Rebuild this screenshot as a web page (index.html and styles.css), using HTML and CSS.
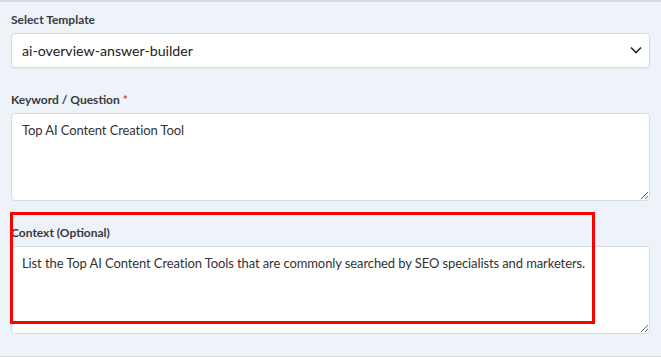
FILE: index.html
```html
<!DOCTYPE html>
<html>
<head>
<meta charset="utf-8">
<link rel="stylesheet" href="styles.css">
</head>
<body>
<div class="panel">
  <div class="group">
    <label class="label">Select Template</label>
    <div class="select">
      <span class="select-value">ai-overview-answer-builder</span>
      <svg class="chevron" width="12" height="8" viewBox="0 0 12 8"><path d="M1 1.5 L6 6.5 L11 1.5" fill="none" stroke="#1f2937" stroke-width="1.6"/></svg>
    </div>
  </div>
  <div class="group">
    <label class="label">Keyword / Question <span class="req">*</span></label>
    <textarea class="field">Top AI Content Creation Tool</textarea>
  </div>
  <div class="group context">
    <label class="label">Context (Optional)</label>
    <textarea class="field">List the Top AI Content Creation Tools that are commonly searched by SEO specialists and marketers.</textarea>
    <div class="highlight"></div>
  </div>
</div>
</body>
</html>
```
FILE: styles.css
```css
html, body {
  margin: 0;
  padding: 0;
}
body {
  background: #eef3fa;
  font-family: Lato, "Noto Sans", sans-serif;
  color: #333;
  width: 661px;
  height: 357px;
  overflow: hidden;
}
.panel {
  border-top: 2px solid #d5d8dd;
  border-bottom: 1px solid #d5d8dd;
  padding: 9px 11px 21px 11px;
  box-sizing: border-box;
  height: 357px;
  display: flex;
  flex-direction: column;
  gap: 23px;
}
.group {
  display: flex;
  flex-direction: column;
  gap: 4px;
  position: relative;
}
.label {
  font-size: 12px;
  line-height: 18px;
  font-weight: 700;
  color: #363a40;
}
.req {
  color: #e0393e;
}
.select {
  height: 35px;
  box-sizing: border-box;
  background: #fff;
  border: 1px solid #d6d9de;
  border-radius: 4px;
  box-shadow: 0 1px 2px rgba(0,0,0,0.06);
  display: flex;
  align-items: center;
  justify-content: space-between;
  padding: 0 7px 0 10px;
}
.select-value {
  font-size: 14.2px;
  color: #222;
}
.chevron {
  margin-top: -1px;
}
.field {
  height: 88px;
  box-sizing: border-box;
  background: #fff;
  border: 1px solid #d6d9de;
  border-radius: 4px;
  padding: 6px 10px;
  font-family: Lato, "Noto Sans", sans-serif;
  font-size: 13px;
  letter-spacing: -0.1px;
  line-height: 20px;
  color: #333;
  resize: vertical;
  margin: 0;
  outline: none;
}
.highlight {
  position: absolute;
  left: -1px;
  top: -12px;
  width: 585px;
  height: 112px;
  box-sizing: border-box;
  border: 3px solid #ff0000;
  pointer-events: none;
}
```
